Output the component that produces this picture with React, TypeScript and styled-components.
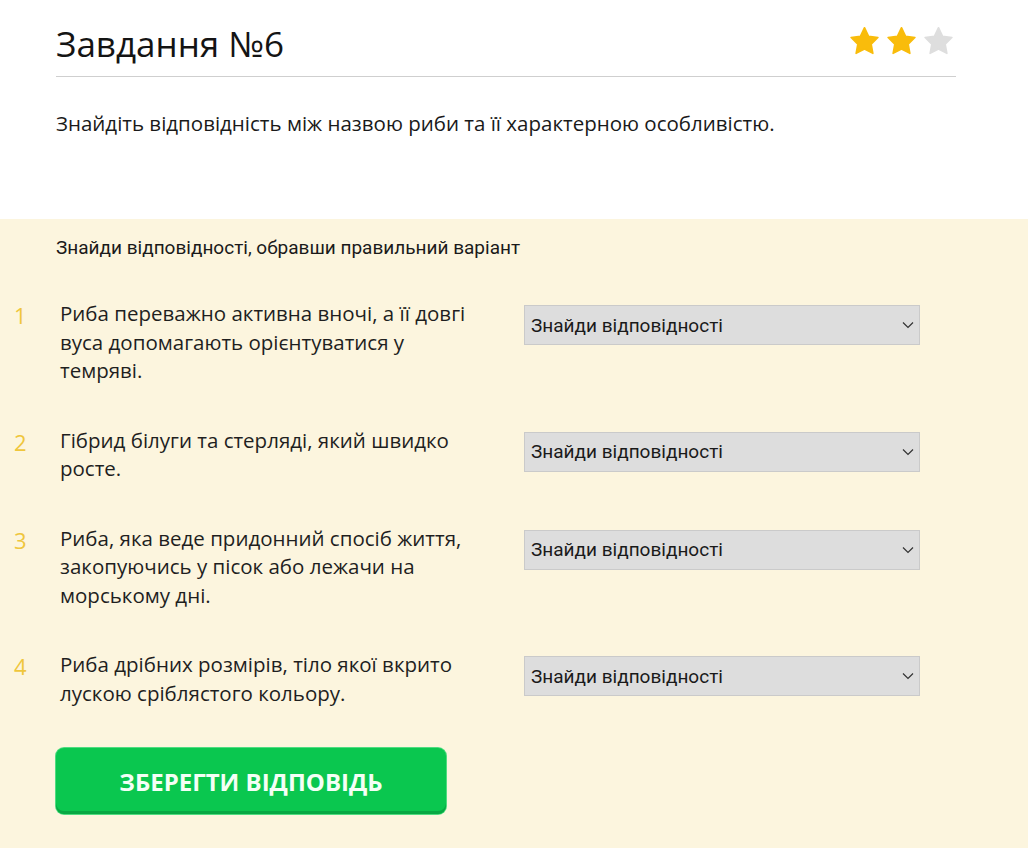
import React from "react"
import styled, { createGlobalStyle } from "styled-components"

const GlobalStyle = createGlobalStyle`
  body {
    margin: 0;
    background: #fff;
    font-family: "Open Sans", "Noto Sans", sans-serif;
    color: #1a1a1a;
  }
`

const Page = styled.div`
  width: 1028px;
  padding-bottom: 20px;
`

const Header = styled.header`
  padding: 18px 72px 0 56px;
`

const TitleRow = styled.div`
  display: flex;
  align-items: center;
  justify-content: space-between;
  border-bottom: 1px solid #cfcfcf;
  padding-bottom: 6px;
`

const Title = styled.h1`
  margin: 0;
  font-size: 35px;
  font-weight: 400;
  line-height: 52px;
  color: #141414;
`

const Stars = styled.div`
  display: flex;
  gap: 6px;
  margin-right: 2px;
  margin-top: -6px;
`

const Description = styled.p`
  margin: 31px 0 0;
  font-size: 20.5px;
  line-height: 30px;
  color: #1a1a1a;
  height: 111px;
`

const Task = styled.section`
  background: #fcf5de;
  padding: 18px 0 34px;
`

const Instruction = styled.p`
  margin: 0 0 40px 56px;
  font-family: Roboto, "Liberation Sans", sans-serif;
  font-size: 19px;
  line-height: 22px;
  color: #1a1a1a;
`

const Rows = styled.div`
  display: flex;
  flex-direction: column;
  gap: 41px;
`

const Row = styled.div`
  display: flex;
  align-items: flex-start;
`

const Num = styled.span`
  width: 45px;
  padding-left: 14px;
  box-sizing: border-box;
  font-size: 22px;
  line-height: 30px;
  color: #efc63c;
  margin-top: 1px;
`

const Text = styled.p`
  margin: 0 0 0 15px;
  width: 414px;
  font-size: 20.5px;
  line-height: 28.5px;
  color: #1f1f1f;
`

const SelectWrap = styled.div`
  position: relative;
  margin: 6px 0 0 50px;
  width: 396px;
  height: 40px;
`

const Select = styled.select`
  appearance: none;
  width: 100%;
  height: 100%;
  box-sizing: border-box;
  background: #dddddd;
  border: 1px solid #cacaca;
  border-radius: 0;
  padding: 0 30px 0 6px;
  font-family: Roboto, "Liberation Sans", sans-serif;
  font-size: 19px;
  color: #1a1a1a;
  outline: none;
`

const Chevron = styled.svg`
  position: absolute;
  right: 6px;
  top: 16px;
  pointer-events: none;
`

const SaveButton = styled.button`
  margin: 41px 0 0 56px;
  width: 390px;
  height: 66px;
  border: none;
  border-radius: 8px;
  background: #0ac74f;
  box-shadow: inset 0 -3px 0 #08a843, 0 0 0 1px #4fdc80;
  color: #f4fff6;
  font-family: "Open Sans", "Noto Sans", sans-serif;
  font-weight: 700;
  font-size: 24px;
  letter-spacing: 0;
  cursor: pointer;
`

const Star = ({ filled }: { filled: boolean }) => (
  <svg width="31" height="30" viewBox="0 0 24 23">
    <path
      d="M12 1.2l3.2 6.6 7.2 1-5.2 5.1 1.3 7.2L12 17.7l-6.5 3.4 1.3-7.2L1.6 8.8l7.2-1z"
      fill={filled ? "#f9bc0b" : "#dedede"}
      stroke={filled ? "#f9bc0b" : "#dedede"}
      strokeWidth="1.2"
      strokeLinejoin="round"
    />
  </svg>
)

const items = [
  "Риба переважно активна вночі, а її довгі вуса допомагають орієнтуватися у темряві.",
  "Гібрид білуги та стерляді, який швидко росте.",
  "Риба, яка веде придонний спосіб життя, закопуючись у пісок або лежачи на морському дні.",
  "Риба дрібних розмірів, тіло якої вкрито лускою сріблястого кольору.",
]

const App = () => {
  return (
    <Page>
      <GlobalStyle />
      <Header>
        <TitleRow>
          <Title>Завдання №6</Title>
          <Stars>
            <Star filled />
            <Star filled />
            <Star filled={false} />
          </Stars>
        </TitleRow>
        <Description>
          Знайдіть відповідність між назвою риби та її характерною особливістю.
        </Description>
      </Header>
      <Task>
        <Instruction>Знайди відповідності, обравши правильний варіант</Instruction>
        <Rows>
          {items.map((text, i) => (
            <Row key={i}>
              <Num>{i + 1}</Num>
              <Text>{text}</Text>
              <SelectWrap>
                <Select defaultValue="">
                  <option value="">Знайди відповідності</option>
                  <option value="a">Сом</option>
                  <option value="b">Бестер</option>
                  <option value="c">Камбала</option>
                  <option value="d">Кілька</option>
                </Select>
                <Chevron width="12" height="8" viewBox="0 0 12 8">
                  <path d="M1 1.5l5 5 5-5" fill="none" stroke="#333" strokeWidth="1.2" />
                </Chevron>
              </SelectWrap>
            </Row>
          ))}
        </Rows>
        <SaveButton>ЗБЕРЕГТИ ВІДПОВІДЬ</SaveButton>
      </Task>
    </Page>
  )
}

export default App
